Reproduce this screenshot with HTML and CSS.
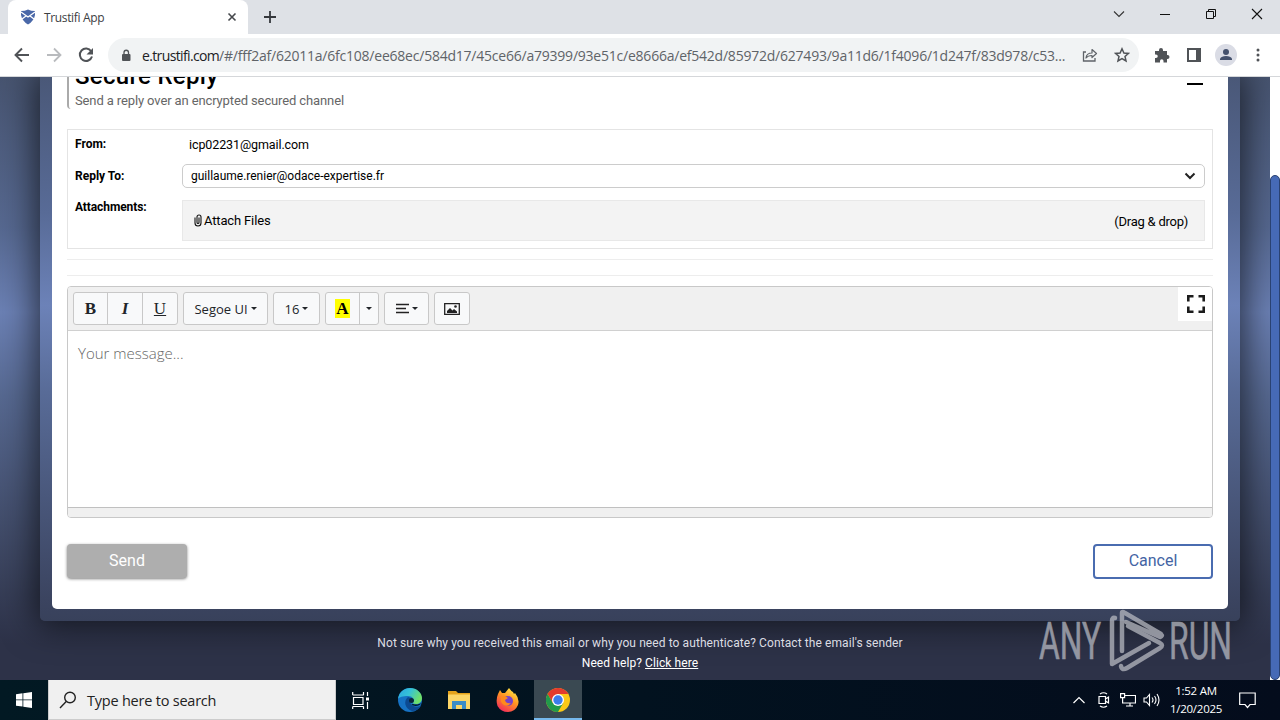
FILE: index.html
```html
<!DOCTYPE html>
<html lang="en">
<head>
  <meta charset="utf-8">
  <title>Trustifi App</title>
  <link rel="stylesheet" href="styles.css">
</head>
<body>
  <div class="tabstrip">
    <div class="tab">
      <svg class="favicon" width="16" height="16" viewBox="0 0 16 16"><path d="M1 2q4 0 7-1.500 3 1.500 7 1.500v4q-1 6-7 9.500Q2 12 1 6z" fill="#4a68a8"/><path d="M1 3l7 5 7-5M2 10l4-3M14 10l-4-3" fill="none" stroke="#fff" stroke-width="1.300"/></svg>
      <span class="tab-title">Trustifi App</span>
      <svg width="10" height="10" viewBox="0 0 10 10"><path d="M1.500 1.500l7 7M8.500 1.500l-7 7" stroke="#45484c" stroke-width="1.600"/></svg>
    </div>
    <svg class="new-tab" width="12" height="12" viewBox="0 0 12 12"><path d="M6 0v12M0 6h12" stroke="#35383c" stroke-width="1.800"/></svg>
    <div class="window-buttons">
      <svg width="12" height="12" viewBox="0 0 12 12"><path d="M1 3.500l5 5 5-5" fill="none" stroke="#333" stroke-width="1.100"/></svg>
      <svg width="12" height="12" viewBox="0 0 12 12"><path d="M1 6.500h10" stroke="#111"/></svg>
      <svg width="12" height="12" viewBox="0 0 12 12"><path d="M1.500 3.500h7v7h-7zM3.500 3.500v-2h7v7h-2" fill="none" stroke="#111"/></svg>
      <svg width="12" height="12" viewBox="0 0 12 12"><path d="M1 1l10 10M11 1L1 11" stroke="#111" stroke-width="1.100"/></svg>
    </div>
  </div>

  <div class="toolbar">
    <svg width="16" height="16" viewBox="0 0 16 16"><path d="M15 8H2M8 1.500L1.500 8 8 14.500" fill="none" stroke="#505357" stroke-width="1.900"/></svg>
    <svg width="16" height="16" viewBox="0 0 16 16"><path d="M1 8h13M8 1.500L14.500 8 8 14.500" fill="none" stroke="#b9bbbe" stroke-width="1.800"/></svg>
    <svg width="16" height="16" viewBox="0 0 16 16"><path d="M13.200 4.200A6.200 6.200 0 1 0 14 9.500" fill="none" stroke="#505357" stroke-width="2"/><path d="M15 1v6.500H8.500z" fill="#505357"/></svg>
    <div class="address">
      <svg width="10" height="13" viewBox="0 0 10 13"><rect x="1" y="5" width="8.500" height="7" rx="1" fill="#505357"/><path d="M3 5.500V3.500a2.250 2.250 0 0 1 4.500 0v2" fill="none" stroke="#505357" stroke-width="1.300"/></svg>
      <div class="url"><span class="host">e.trustifi.com</span>/#/fff2af/62011a/6fc108/ee68ec/584d17/45ce66/a79399/93e51c/e8666a/ef542d/85972d/627493/9a11d6/1f4096/1d247f/83d978/c53...</div>
      <svg class="share" width="16" height="16" viewBox="0 0 16 16"><path d="M4 5H1.500v9H13v-3" fill="none" stroke="#5f6368" stroke-width="1.300"/><path d="M4 11q.5-5 6-5V2.500l4.500 4-4.500 4V8.500q-4 0-6 2.500z" fill="none" stroke="#5f6368" stroke-width="1.200" stroke-linejoin="round"/></svg>
      <svg width="16" height="16" viewBox="0 0 16 16"><path d="M8 1.800l1.900 4.200 4.500.4-3.400 3 1 4.500L8 11.500l-4 2.400 1-4.500-3.400-3L6.100 6z" fill="none" stroke="#505357" stroke-width="1.500"/></svg>
    </div>
    <svg class="ext" width="16" height="16" viewBox="0 0 16 16"><path d="M1 4h4V3a2 2 0 0 1 4 0v1h4v4h.5a2 2 0 0 1 0 4H13v3.500H9.500V14a1.700 1.700 0 0 0-3.500 0v1.500H1V11h1a1.600 1.600 0 0 0 0-3.500H1z" fill="#505357"/></svg>
    <svg class="side" width="14" height="14" viewBox="0 0 14 14"><path d="M1 1h12v12H1z" fill="none" stroke="#505357" stroke-width="2"/><path d="M9 1h4v12H9z" fill="#505357"/></svg>
    <svg class="avatar" width="22" height="22" viewBox="0 0 22 22"><circle cx="11" cy="11" r="11" fill="#dadce5"/><circle cx="11" cy="8" r="3" fill="#43506c"/><path d="M5 16v-1.500q1.500-2.500 6-2.500t6 2.500V16z" fill="#43506c"/></svg>
    <svg class="dots" width="4" height="14" viewBox="0 0 4 14"><circle cx="2" cy="2" r="1.500" fill="#505357"/><circle cx="2" cy="7" r="1.500" fill="#505357"/><circle cx="2" cy="12" r="1.500" fill="#505357"/></svg>
  </div>

  <div class="page">
    <div class="content">
      <div class="frame">
        <div class="card">
          <div class="card-head">
            <div class="heading">
              <div class="title">Secure Reply</div>
              <div class="subtitle">Send a reply over an encrypted secured channel</div>
            </div>
            <div class="collapse"></div>
          </div>

          <div class="meta">
            <div class="label">From:</div>
            <div class="from">icp02231@gmail.com</div>
            <div class="label">Reply To:</div>
            <div class="select"><span>guillaume.renier@odace-expertise.fr</span>
              <svg width="12" height="8" viewBox="0 0 12 8"><path d="M1.500 1.500L6 6l4.500-4.500" fill="none" stroke="#222" stroke-width="2"/></svg>
            </div>
            <div class="label top">Attachments:</div>
            <div class="drop">
              <span class="attach"><svg width="8" height="13" viewBox="0 0 8 13"><path d="M1 3.500V9a3 3 0 0 0 6 0V3a2 2 0 0 0-4 0v5.500a1 1 0 0 0 2 0V3.500" fill="none" stroke="#111" stroke-width="1.100"/></svg>Attach Files</span>
              <span class="drag">(Drag &amp; drop)</span>
            </div>
          </div>

          <div class="divider"></div>
          <div class="divider second"></div>

          <div class="editor">
            <div class="editor-tools">
              <div class="group">
                <span class="btn glyph bold">B</span>
                <span class="btn glyph italic">I</span>
                <span class="btn glyph under">U</span>
              </div>
              <div class="group"><span class="btn font">Segoe UI<i class="caret"></i></span></div>
              <div class="group"><span class="btn size">16<i class="caret"></i></span></div>
              <div class="group">
                <span class="btn color"><b class="mark">A</b></span>
                <span class="btn arrow"><i class="caret"></i></span>
              </div>
              <div class="group"><span class="btn align"><svg width="13" height="11" viewBox="0 0 13 11"><path d="M0 1.500h13M0 5.500h10M0 9.500h13" stroke="#222" stroke-width="1.500"/></svg><i class="caret"></i></span></div>
              <div class="group"><span class="btn picture"><svg width="16" height="12" viewBox="0 0 16 12"><path d="M.7.700h14.600v10.600H.7z" fill="none" stroke="#222" stroke-width="1.300"/><path d="M3 10V8l3-3 2.500 2.500L10 6l3 2.500V10z" fill="#222"/><circle cx="11.500" cy="3.500" r="1.300" fill="#222"/></svg></span></div>
              <div class="expand"><svg width="18" height="18" viewBox="0 0 18 18"><path d="M1.300 6.500V1.300h5.200M11.500 1.300h5.200v5.200M16.700 11.500v5.200h-5.200M6.500 16.700H1.300v-5.200" fill="none" stroke="#1c1c1c" stroke-width="2.600"/></svg></div>
            </div>
            <div class="message">Your message...</div>
            <div class="editor-foot"></div>
          </div>

          <div class="actions">
            <div class="send">Send</div>
            <div class="cancel">Cancel</div>
          </div>
        </div>
      </div>
      <div class="help">Not sure why you received this email or why you need to authenticate? Contact the email's sender</div>
      <div class="help need">Need help? <u>Click here</u></div>
    </div>
    <div class="scrollbar"><div class="thumb"></div></div>
    <svg class="watermark" width="194" height="64" viewBox="0 0 194 64">
      <g fill="#b6b8c0" stroke="#b6b8c0" stroke-width=".6" font-family="Roboto" font-size="52">
        <text x="0" y="50" textLength="62" lengthAdjust="spacingAndGlyphs">ANY</text>
        <text x="130" y="50" textLength="63" lengthAdjust="spacingAndGlyphs">RUN</text>
      </g>
      <g fill="none" stroke="#b6b8c0" stroke-width="4.500" stroke-linecap="round" stroke-linejoin="round">
        <path d="M76 9q-3-1-3 3v43l37-21"/>
        <path d="M83 42V4q0-2 3 0l36 21q2 2-1 3l-34-15"/>
        <path d="M82 57q1 5 6 2l33-20q4-3 0-5L89 17"/>
      </g>
    </svg>
  </div>

  <div class="taskbar">
    <div class="start"><svg width="16" height="16" viewBox="0 0 16 16"><path d="M0 2.200L6.500 1.300v6.200H0zM7.300 1.200L16 0v7.500H7.300zM0 8.300h6.500v6.300L0 13.700zM7.300 8.300H16V16l-8.700-1.200z" fill="#fff"/></svg></div>
    <div class="search">
      <svg width="18" height="18" viewBox="0 0 18 18"><circle cx="11" cy="6.500" r="5.300" fill="none" stroke="#222" stroke-width="1.400"/><path d="M7.200 10.500L1 17" stroke="#222" stroke-width="1.400"/></svg>
      <span>Type here to search</span>
    </div>
    <div class="apps">
    <div class="app"><svg width="17" height="17" viewBox="0 0 17 17"><path d="M.7 0v3M11.500 0v3M.7 3h11M1.500 5.500h9.500v7H1.500zM.7 14.500h11M.7 14.500V17M11.500 14.500V17M15.500 0v4M15.500 10v7" fill="none" stroke="#fff" stroke-width="1.200"/><path d="M14 5.500h3v3h-3z" fill="#fff"/></svg></div>
    <div class="app"><svg width="24" height="24" viewBox="0 0 24 24">
      <defs><linearGradient id="edge" x1="0" y1="0" x2="1" y2=".4"><stop offset="0" stop-color="#2aa5e0"/><stop offset=".5" stop-color="#35c1d8"/><stop offset="1" stop-color="#6fe06a"/></linearGradient></defs>
      <circle cx="12" cy="12" r="12" fill="#1672c4"/>
      <path d="M0 11C1 4 6 0 12 0c7 0 12 5 12 10 0 4-3 6-6 6-3 0-4-1-3-2 2-3-1-6-5-6-5 0-9 1-10 3z" fill="url(#edge)"/>
      <path d="M10 9c-5 4-3 12 4 14 4 0 7-2 9-5-5 2-10 0-11-4-.5-2 0-3 1-4z" fill="#0c4a92"/>
      <path d="M23.500 15c-2 3-7 4-10 1.500l1.500-.5c3 1 6 .5 8.500-1z" fill="#021722"/><circle cx="13.500" cy="12.500" r="2.500" fill="#08263e"/>
    </svg></div>
    <div class="app"><svg width="22" height="20" viewBox="0 0 22 20"><path d="M0 1h8l2 2h12v15H0z" fill="#e5a31b"/><path d="M0 4.500h22V19H0z" fill="#fcd667"/><path d="M4 19v-8h14v8h-4v-4H8v4z" fill="#3b8cc6"/></svg></div>
    <div class="app"><svg width="24" height="24" viewBox="0 0 24 24">
      <defs><linearGradient id="fox" x1=".8" y1="0" x2=".2" y2="1"><stop offset="0" stop-color="#fff04a"/><stop offset=".45" stop-color="#ff9421"/><stop offset="1" stop-color="#f3245f"/></linearGradient></defs>
      <path d="M2 6l2-4 2 3 3 0 4-5q2 3 4 4l1 2 1-1q5 6 3 12-3 7-10 7T1.500 18Q-.5 12 2 6z" fill="url(#fox)"/>
      <circle cx="12" cy="13" r="5" fill="#7542c8"/><path d="M5 9q4-2 7 1l-3 2q1 4 6 3-3 4-7 2T5 9z" fill="#ff8a1c"/>
    </svg></div>
    <div class="app active"><svg width="24" height="24" viewBox="0 0 24 24">
      <circle cx="12" cy="12" r="12" fill="#fbc816"/>
      <path d="M1.600 6A12 12 0 0 1 22.400 6H12l-5.200 9z" fill="#e33b2e"/>
      <path d="M1.600 6A12 12 0 0 0 12 24l5.200-9H6.800z" fill="#229a4b"/>
      <circle cx="12" cy="12" r="6" fill="#fff"/><circle cx="12" cy="12" r="4.700" fill="#3b7ded"/>
    </svg></div>
    </div>
    <div class="tray">
      <svg width="12" height="8" viewBox="0 0 12 8"><path d="M.5 7L6 1.500 11.500 7" fill="none" stroke="#fff" stroke-width="1.200"/></svg>
      <svg class="cam" width="12" height="16" viewBox="0 0 12 16"><path d="M1 4.500h6.500v7H1zM7.500 7l3-2v6l-3-2M2 2q3.500-2.500 7 0M2 14q3.500 2.500 7 0" fill="none" stroke="#fff" stroke-width="1.200"/></svg>
      <svg class="net" width="16" height="14" viewBox="0 0 16 14"><path d="M5 2.500h10.500v7.500H4M10 10v3M6 13h7M.6.600h4v4h-4zM2.600 4.600V10H5" fill="none" stroke="#fff" stroke-width="1.200"/></svg>
      <svg class="vol" width="17" height="14" viewBox="0 0 17 14"><path d="M1 5h2.500l3-3.500v11l-3-3.500H1zM9 4.500q2 2.500 0 5M11.500 3q3 4 0 8M14 1q4 6 0 12" fill="none" stroke="#fff" stroke-width="1.100"/></svg>
      <div class="clock">1:52 AM<br>1/20/2025</div>
      <svg width="17" height="17" viewBox="0 0 17 17"><path d="M.7 1h15.500v11.500H11L8.500 15.500 6 12.500H.7z" fill="none" stroke="#fff" stroke-width="1.200"/></svg>
    </div>
  </div>
</body>
</html>
```
FILE: styles.css
```css
* {
  box-sizing: border-box;
}
body {
  margin: 0;
  width: 1280px;
  height: 720px;
  overflow: hidden;
  display: flex;
  flex-direction: column;
  font-family: Roboto, sans-serif;
  color: #000;
}
svg {
  display: block;
  flex: none;
}

/* browser */
.tabstrip {
  height: 34px;
  background: #dee1e6;
  display: flex;
  padding-left: 8px;
  font-family: "Open Sans", "Noto Sans", sans-serif;
}
.tab {
  width: 240px;
  background: #fff;
  border-radius: 8px 8px 0 0;
  display: flex;
  align-items: center;
  padding: 0 11px 0 12px;
}
.tab-title {
  flex: 1;
  margin-left: 8px;
  font-size: 12px;
  letter-spacing: -0.35px;
  color: #3c4043;
}
.new-tab {
  margin: 11px 0 0 16px;
}
.window-buttons {
  margin-left: auto;
  padding: 8px 17px 0 0;
  display: flex;
  gap: 34px;
}
.toolbar {
  height: 43px;
  background: #fff;
  border-bottom: 1px solid #d5d7da;
  display: flex;
  align-items: center;
  padding-left: 14px;
  gap: 16px;
}
.address {
  width: 1031px;
  height: 34px;
  margin-left: -2px;
  border-radius: 17px;
  background: #f1f3f4;
  display: flex;
  align-items: center;
  padding: 0 9px 0 13px;
}
.url {
  width: 925px;
  margin-left: 11px;
  white-space: nowrap;
  font-family: "Open Sans", "Noto Sans", sans-serif;
  font-size: 14px;
  letter-spacing: -0.225px;
  color: #5f6368;
}
.host {
  letter-spacing: -0.64px;
  color: #202124;
}
.share {
  margin: 0 16px 0 15px;
}
.ext {
  margin-left: -1px;
}
.side {
  margin-left: 1px;
}
.avatar {
  margin-left: -2px;
}
.dots {
  margin-left: 3px;
}

/* page */
.page {
  position: relative;
  height: 603px;
  display: flex;
  justify-content: space-between;
  overflow: hidden;
  background: linear-gradient(#475470, #566890 25%, #6b80b4 39%, #566890 53%, #3c4560 80%, #2d3248 94%, #2d3248);
}
.content {
  width: 1200px;
  margin-left: 40px;
}
.frame {
  height: 544px;
  padding: 0 12px 12px;
  border-radius: 0 0 5px 5px;
  background: linear-gradient(#4a5878, #586b97 25%, #6c82b8 42%, #586b97 58%, #3b4460 96%, #38415b);
  box-shadow: 0 0 34px 4px rgba(0, 0, 0, 0.65);
}
.card {
  height: 532px;
  padding: 0 15px;
  background: #fff;
  border-radius: 0 0 5px 5px;
}
.card-head {
  height: 32px;
  display: flex;
  justify-content: space-between;
}
.heading {
  height: 32px;
  overflow: hidden;
  display: flex;
  flex-direction: column;
  justify-content: flex-end;
  padding-left: 6px;
  border-left: 2px solid #aaa;
  border-radius: 0 0 0 4px;
}
.title {
  flex: none;
  font-size: 24px;
  line-height: 31px;
  font-weight: 500;
  letter-spacing: 0.3px;
}
.subtitle {
  flex: none;
  font-size: 13px;
  line-height: 17px;
  letter-spacing: -0.12px;
  color: #666;
}
.collapse {
  width: 16px;
  height: 2px;
  margin: 6px 10px 0 0;
  background: #000;
}
.meta {
  height: 120px;
  margin-top: 20px;
  border: 1px solid #e4e4e4;
  padding: 0 7px;
  display: grid;
  grid-template-columns: 107px 1fr;
  grid-template-rows: 28px 35px 52px;
  align-items: center;
  font-size: 12px;
}
.label {
  font-weight: 700;
}
.label.top {
  align-self: start;
  padding-top: 7px;
  letter-spacing: -0.1px;
}
.from {
  padding-left: 7px;
  font-size: 12.500px;
  letter-spacing: -0.1px;
}
.select {
  height: 24px;
  border: 1px solid #ccc;
  border-radius: 5px;
  display: flex;
  align-items: center;
  justify-content: space-between;
  padding: 0 8px;
}
.drop {
  height: 41px;
  margin-top: 3px;
  background: #f3f3f3;
  border: 1px solid #e8e8e8;
  display: flex;
  align-items: center;
  justify-content: space-between;
  padding: 0 16px 0 11px;
  font-size: 13px;
  letter-spacing: -0.15px;
}
.attach {
  display: flex;
  align-items: center;
  gap: 2px;
}
.drag {
  padding-top: 2px;
  letter-spacing: -0.25px;
}
.divider {
  height: 1px;
  margin-top: 10px;
  background: #ededed;
}
.divider.second {
  margin-top: 15px;
}
.editor {
  height: 232px;
  margin-top: 10px;
  border: 1px solid #c8c8c8;
  border-radius: 4px;
  overflow: hidden;
  display: flex;
  flex-direction: column;
}
.editor-tools {
  height: 44px;
  background: #f0f0f0;
  border-bottom: 1px solid #d0d0d0;
  padding: 5px 0 0 5px;
  display: flex;
  gap: 5px;
}
.group {
  height: 33px;
  display: flex;
  background: #f8f9fa;
  border: 1px solid #c8c8c8;
  border-radius: 3px;
  color: #212529;
}
.btn {
  display: flex;
  align-items: center;
  justify-content: center;
  font-family: "Open Sans", "Noto Sans", sans-serif;
  font-size: 13px;
}
.btn + .btn {
  border-left: 1px solid #c8c8c8;
}
.glyph {
  width: 35px;
  font-family: "Liberation Serif", serif;
  font-size: 17px;
  font-weight: 700;
}
.glyph.bold {
  width: 33px;
}
.italic {
  font-style: italic;
}
.under {
  font-weight: 400;
  text-decoration: underline;
}
.font {
  width: 83px;
}
.size {
  width: 45px;
}
.caret {
  margin-left: 3px;
  border: 3px solid transparent;
  border-top-color: #212529;
  border-bottom: 0;
}
.color {
  width: 33px;
}
.mark {
  padding: 0 1px;
  background: #ff0;
  color: #000;
  font-family: "Liberation Serif", serif;
  font-size: 17px;
  line-height: 19px;
}
.arrow {
  width: 19px;
}
.arrow .caret {
  margin-left: 0;
}
.align {
  width: 43px;
}
.picture {
  width: 34px;
}
.expand {
  width: 34px;
  height: 34px;
  margin: -5px 0 0 auto;
  background: #fff;
  display: flex;
  align-items: center;
  justify-content: center;
  padding-left: 1px;
}
.message {
  flex: 1;
  padding: 11px 10px;
  font-family: "Open Sans", "Noto Sans", sans-serif;
  font-size: 15px;
  line-height: 22px;
  font-weight: 300;
  color: #666;
}
.editor-foot {
  height: 10px;
  background: #f0f0f0;
  border-top: 1px solid #c0c0c0;
}
.actions {
  margin-top: 26px;
  display: flex;
  justify-content: space-between;
  font-size: 16px;
  line-height: 33px;
  text-align: center;
}
.send {
  width: 120px;
  height: 34px;
  border-radius: 4px;
  background: #aeaeae;
  color: #fff;
  box-shadow: 0 1px 3px rgba(0, 0, 0, 0.5);
}
.cancel {
  width: 120px;
  height: 35px;
  border: 2px solid #4a6cb0;
  border-radius: 4px;
  color: #4464a4;
  line-height: 29px;
}
.help {
  margin-top: 12px;
  text-align: center;
  font-size: 12px;
  line-height: 20px;
  letter-spacing: 0.09px;
  color: #dcdde3;
}
.help.need {
  margin-top: 0;
  color: #fff;
}
.scrollbar {
  width: 10px;
  background: #fff;
  padding-top: 98px;
}
.thumb {
  height: 505px;
  background: #466ab6;
  border: 1px solid #2a4272;
  border-radius: 5px;
}
.watermark {
  position: absolute;
  left: 1039px;
  top: 532px;
  opacity: 0.75;
}

/* taskbar */
.taskbar {
  height: 40px;
  background: linear-gradient(90deg, #021923, #02121f 50%, #040c1c);
  display: flex;
}
.start {
  width: 48px;
  display: flex;
  align-items: center;
  justify-content: center;
}
.search {
  width: 288px;
  background: #f0f0f0;
  border: 1px solid #ccc;
  border-top: 0;
  display: flex;
  align-items: center;
  padding-left: 10px;
  gap: 10px;
  font-family: "Open Sans", "Noto Sans", sans-serif;
  font-size: 14.500px;
  letter-spacing: -0.22px;
  color: #222;
}
.search span {
  padding-top: 2px;
}
.apps {
  display: flex;
}
.app {
  width: 49px;
  display: flex;
  align-items: center;
  justify-content: center;
}
.app + .app {
  padding-left: 1px;
}
.app.active {
  width: 48px;
  margin-left: 2px;
  padding: 2px 0 0;
  background: #3a4952;
  border-bottom: 2px solid #76b9ed;
}
.tray {
  margin-left: auto;
  padding-right: 24px;
  display: flex;
  align-items: center;
}
.cam {
  margin-left: 13px;
}
.net {
  margin-left: 10px;
}
.vol {
  margin-left: 7px;
}
.clock {
  width: 70px;
  margin: 0 8px 0 1px;
  text-align: center;
  font-family: "Open Sans", "Noto Sans", sans-serif;
  font-size: 11.500px;
  line-height: 18px;
  letter-spacing: -0.25px;
  color: #fff;
}
```
